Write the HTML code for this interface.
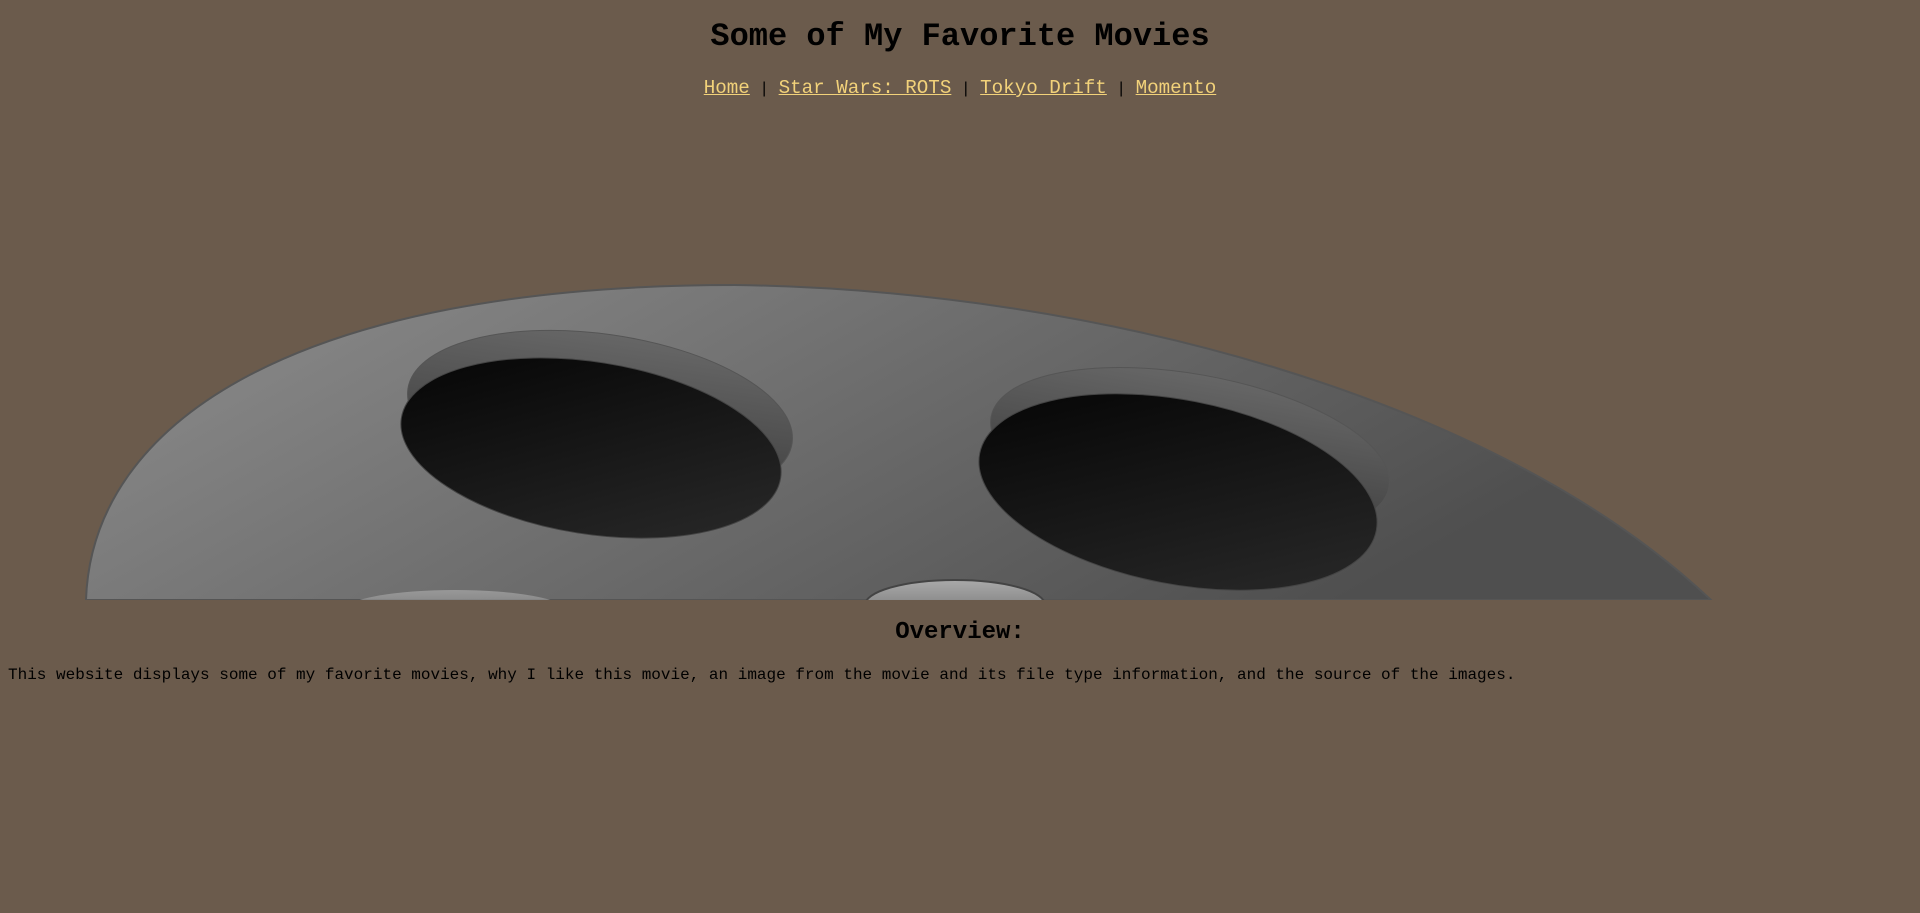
<!DOCTYPE html>
<html><head><meta charset="utf-8"><style>
html,body{margin:0;padding:0;background:#6b5b4c;width:1920px;height:913px;overflow:hidden;font-family:"Liberation Mono","Courier New",monospace;color:#000}
.a{position:absolute;left:0;width:1920px;text-align:center;white-space:nowrap}
h1{margin:0;font-size:32px;font-weight:bold;line-height:32px;top:21px}
.nav{top:76px;font-size:16px;line-height:24px}
.nav a{color:#f2d27a;font-size:19.2px;text-decoration:underline}
h2{margin:0;font-size:24px;line-height:24px;top:621px;font-weight:bold}
p{position:absolute;margin:0;left:8px;top:666px;font-size:16px;line-height:18px;white-space:nowrap}
svg{position:absolute;left:0;top:0}
</style></head><body>
<h1 class="a">Some of My Favorite Movies</h1>
<div class="a nav"><a>Home</a> | <a>Star Wars: ROTS</a> | <a>Tokyo Drift</a> | <a>Momento</a></div>
<svg width="1920" height="600" viewBox="0 0 1920 600">
<defs>
<linearGradient id="g" x1="0" y1="0" x2="1" y2="0.35"><stop offset="0" stop-color="#8e8e8e"/><stop offset="1" stop-color="#4f4f4f"/></linearGradient>
<linearGradient id="h" x1="0" y1="0" x2="1" y2="1"><stop offset="0" stop-color="#030303"/><stop offset="1" stop-color="#2b2b2b"/></linearGradient>
<linearGradient id="s" x1="0" y1="0" x2="0" y2="1"><stop offset="0" stop-color="#666"/><stop offset="1" stop-color="#3a3a3a"/></linearGradient>
<linearGradient id="b" x1="0" y1="0" x2="0" y2="1"><stop offset="0" stop-color="#aaa"/><stop offset="1" stop-color="#666"/></linearGradient>
</defs>
<path d="M86,600 C92,420 300,285 735,285 C1100,290 1500,400 1711,600 Z" fill="url(#g)" stroke="#555" stroke-width="2"/>
<ellipse cx="600" cy="416" rx="194" ry="82" transform="rotate(8 600 416)" fill="url(#s)" stroke="#555"/>
<ellipse cx="591" cy="448" rx="192" ry="86" transform="rotate(9 591 448)" fill="url(#h)" stroke="#444"/>
<ellipse cx="1190" cy="452" rx="202" ry="78" transform="rotate(10 1190 452)" fill="url(#s)" stroke="#555"/>
<ellipse cx="1178" cy="492" rx="202" ry="92" transform="rotate(11 1178 492)" fill="url(#h)" stroke="#444"/>
<ellipse cx="455" cy="610" rx="110" ry="20" fill="url(#b)" opacity="0.7"/>
<ellipse cx="955" cy="605" rx="90" ry="25" fill="url(#b)" stroke="#444" stroke-width="2"/>
</svg>
<h2 class="a">Overview:</h2>
<p>This website displays some of my favorite movies, why I like this movie, an image from the movie and its file type information, and the source of the images.</p>
</body></html>
